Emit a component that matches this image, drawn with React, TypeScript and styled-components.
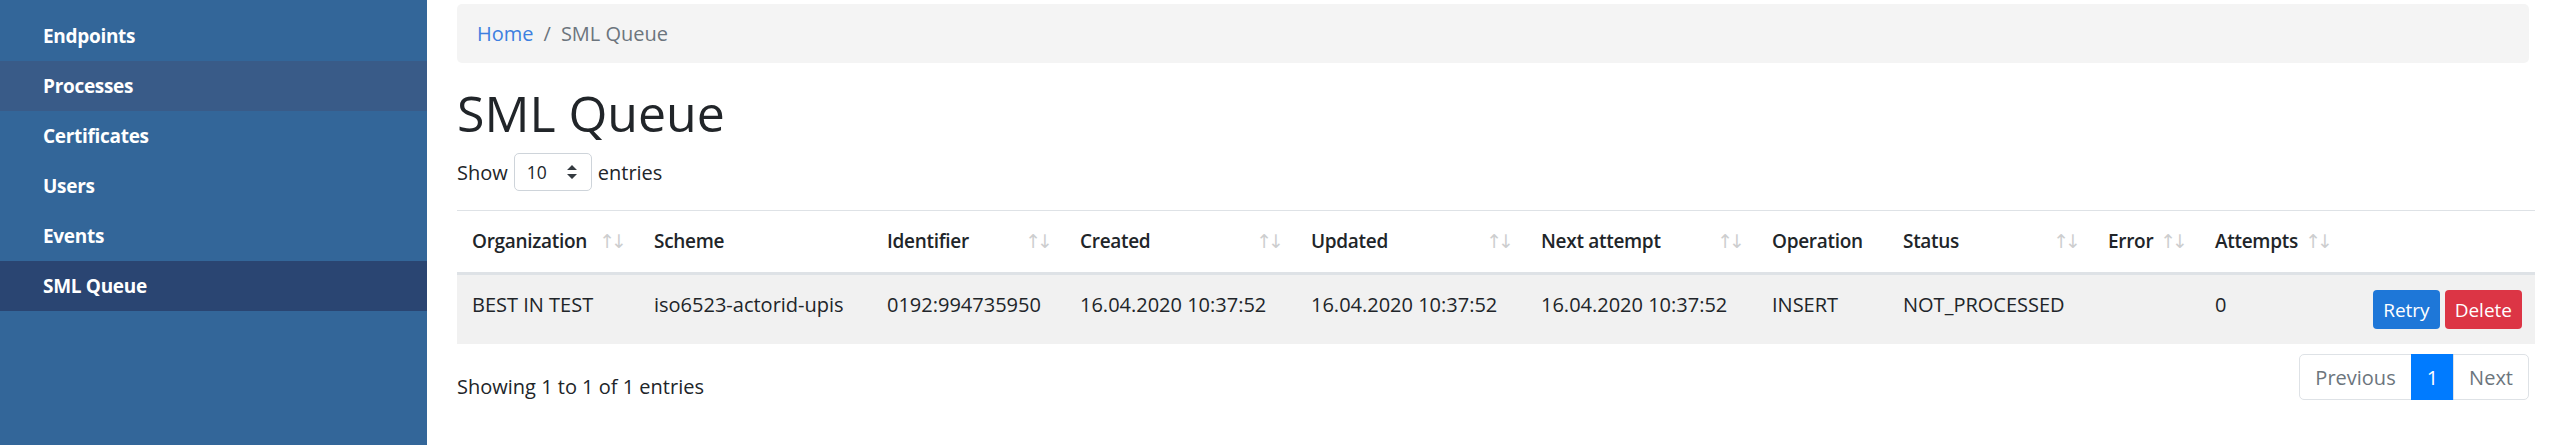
import React from "react";
import styled, { createGlobalStyle } from "styled-components";

const GlobalStyle = createGlobalStyle`
  html, body {
    margin: 0;
    padding: 0;
    background: #ffffff;
    font-family: "Open Sans", "Noto Sans", sans-serif;
    color: #212529;
  }
  * {
    box-sizing: border-box;
  }
`;

type Column = {
  label: string;
  width: number;
  sortable: boolean;
};

const columns: Column[] = [
  { label: "Organization", width: 182, sortable: true },
  { label: "Scheme", width: 233, sortable: false },
  { label: "Identifier", width: 193, sortable: true },
  { label: "Created", width: 231, sortable: true },
  { label: "Updated", width: 230, sortable: true },
  { label: "Next attempt", width: 231, sortable: true },
  { label: "Operation", width: 131, sortable: false },
  { label: "Status", width: 205, sortable: true },
  { label: "Error", width: 107, sortable: true },
  { label: "Attempts", width: 145, sortable: true },
  { label: "", width: 190, sortable: false },
];

const rows = [
  {
    organization: "BEST IN TEST",
    scheme: "iso6523-actorid-upis",
    identifier: "0192:994735950",
    created: "16.04.2020 10:37:52",
    updated: "16.04.2020 10:37:52",
    nextAttempt: "16.04.2020 10:37:52",
    operation: "INSERT",
    status: "NOT_PROCESSED",
    error: "",
    attempts: "0",
  },
];

const menu = ["Endpoints", "Processes", "Certificates", "Users", "Events", "SML Queue"];

const Layout = styled.div`
  display: flex;
  min-height: 100vh;
`;

const Sidebar = styled.nav`
  width: 427px;
  flex-shrink: 0;
  background: #336699;
  padding-top: 11px;
  display: flex;
  flex-direction: column;
`;

const MenuItem = styled.a<{ $state?: "hover" | "active" }>`
  display: flex;
  align-items: center;
  height: 50px;
  padding-left: 43px;
  color: #ffffff;
  font-size: 19px;
  font-weight: 700;
  letter-spacing: -0.3px;
  text-decoration: none;
  background: ${(p) =>
    p.$state === "active" ? "#2a4572" : p.$state === "hover" ? "#395b88" : "transparent"};
`;

const Main = styled.main`
  flex: 1;
  min-width: 0;
  padding: 4px 22px 0 30px;
`;

const Breadcrumb = styled.nav`
  display: flex;
  align-items: center;
  margin: 0 0 20px;
  padding: 15px 20px;
  height: 59px;
  background: #f4f4f4;
  border-radius: 5px;
  font-size: 20px;
  line-height: 30px;
  color: #6c757d;
`;

const CrumbLink = styled.a`
  color: #3d7fe0;
  text-decoration: none;
`;

const CrumbSeparator = styled.span`
  padding: 0 10px;
  color: #6c757d;
`;

const Title = styled.h1`
  margin: 0 0 10px;
  font-size: 50px;
  font-weight: 400;
  line-height: 60px;
`;

const LengthRow = styled.div`
  display: flex;
  align-items: center;
  gap: 6px;
  font-size: 20px;
  height: 38px;
  margin-bottom: 19px;
`;

const Select = styled.div`
  display: flex;
  align-items: center;
  justify-content: space-between;
  width: 78px;
  height: 38px;
  padding: 0 14px 0 12px;
  border: 1px solid #ced4da;
  border-radius: 5px;
  font-size: 17.5px;
`;

const Table = styled.table`
  width: 2078px;
  table-layout: fixed;
  border-collapse: collapse;
  font-size: 20px;
  line-height: 30px;
`;

const Th = styled.th`
  padding: 15px 12px 16px 15px;
  text-align: left;
  font-size: 19px;
  font-weight: 600;
  letter-spacing: -0.3px;
  vertical-align: bottom;
  border-top: 1px solid #dee2e6;
  border-bottom: 3px solid #dee2e6;
  white-space: nowrap;
`;

const ThInner = styled.div`
  display: flex;
  align-items: center;
  justify-content: space-between;
`;

const SortIcon = styled.span`
  display: flex;
  font-family: "DejaVu Sans", sans-serif;
  font-size: 19px;
  font-weight: 400;
  line-height: 20px;
  color: #212529;
  opacity: 0.22;
  letter-spacing: -4px;
  padding-right: 4px;
`;

const Tr = styled.tr<{ $striped?: boolean }>`
  background: ${(p) => (p.$striped ? "#f1f1f1" : "transparent")};
`;

const Td = styled.td`
  padding: 15px;
  vertical-align: top;
  border-top: 1px solid #dee2e6;
  white-space: nowrap;
`;

const ActionCell = styled(Td)`
  padding-right: 13px;
`;

const Actions = styled.div`
  display: flex;
  justify-content: flex-end;
  gap: 5px;
`;

const Button = styled.button<{ $variant: "primary" | "danger" }>`
  height: 39px;
  padding: 0 10px;
  border: none;
  border-radius: 4px;
  font-family: inherit;
  font-size: 19px;
  color: #ffffff;
  background: ${(p) => (p.$variant === "primary" ? "#1e77d8" : "#dc3545")};
`;

const Footer = styled.div`
  display: flex;
  justify-content: space-between;
  align-items: flex-start;
`;

const Info = styled.div`
  padding-top: 28px;
  font-size: 20px;
  line-height: 30px;
`;

const Pagination = styled.ul`
  display: flex;
  list-style: none;
  margin: 10px 0 0;
  padding: 0;
`;

const PageLink = styled.li<{ $active?: boolean; $first?: boolean; $last?: boolean }>`
  height: 46px;
  padding: 0 15px;
  display: flex;
  align-items: center;
  font-size: 20px;
  border: 1px solid ${(p) => (p.$active ? "#007bff" : "#dee2e6")};
  margin-left: ${(p) => (p.$first ? "0" : "-1px")};
  background: ${(p) => (p.$active ? "#007bff" : "#ffffff")};
  color: ${(p) => (p.$active ? "#ffffff" : "#6c757d")};
  border-radius: ${(p) => (p.$first ? "5px 0 0 5px" : p.$last ? "0 5px 5px 0" : "0")};
`;

const Caret = () => (
  <svg width="10" height="14" viewBox="0 0 10 14">
    <path d="M5 0 L10 5 L0 5 Z M5 14 L10 9 L0 9 Z" fill="#343a40" />
  </svg>
);

export default function App() {
  return (
    <>
      <GlobalStyle />
      <Layout>
        <Sidebar>
          {menu.map((item) => (
            <MenuItem
              key={item}
              $state={item === "SML Queue" ? "active" : item === "Processes" ? "hover" : undefined}
            >
              {item}
            </MenuItem>
          ))}
        </Sidebar>
        <Main>
          <Breadcrumb>
            <CrumbLink>Home</CrumbLink>
            <CrumbSeparator>/</CrumbSeparator>
            <span>SML Queue</span>
          </Breadcrumb>
          <Title>SML Queue</Title>
          <LengthRow>
            Show
            <Select>
              10
              <Caret />
            </Select>
            entries
          </LengthRow>
          <Table>
            <colgroup>
              {columns.map((c, i) => (
                <col key={i} style={{ width: c.width }} />
              ))}
            </colgroup>
            <thead>
              <tr>
                {columns.map((c, i) => (
                  <Th key={i}>
                    <ThInner>
                      {c.label}
                      {c.sortable && <SortIcon>↑↓</SortIcon>}
                    </ThInner>
                  </Th>
                ))}
              </tr>
            </thead>
            <tbody>
              {rows.map((r, i) => (
                <Tr key={i} $striped={i % 2 === 0}>
                  <Td>{r.organization}</Td>
                  <Td>{r.scheme}</Td>
                  <Td>{r.identifier}</Td>
                  <Td>{r.created}</Td>
                  <Td>{r.updated}</Td>
                  <Td>{r.nextAttempt}</Td>
                  <Td>{r.operation}</Td>
                  <Td>{r.status}</Td>
                  <Td>{r.error}</Td>
                  <Td>{r.attempts}</Td>
                  <ActionCell>
                    <Actions>
                      <Button $variant="primary">Retry</Button>
                      <Button $variant="danger">Delete</Button>
                    </Actions>
                  </ActionCell>
                </Tr>
              ))}
            </tbody>
          </Table>
          <Footer>
            <Info>Showing 1 to 1 of 1 entries</Info>
            <Pagination>
              <PageLink $first>Previous</PageLink>
              <PageLink $active>1</PageLink>
              <PageLink $last>Next</PageLink>
            </Pagination>
          </Footer>
        </Main>
      </Layout>
    </>
  );
}
